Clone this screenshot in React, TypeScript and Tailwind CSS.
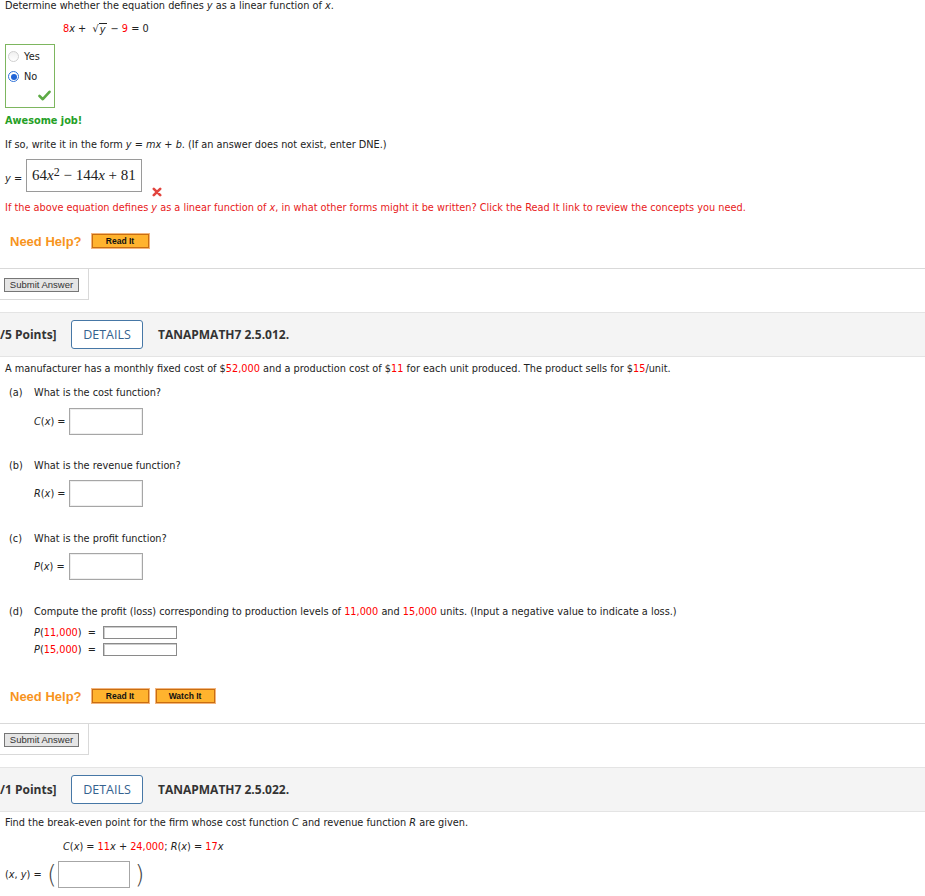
import type { ReactNode } from "react";

// small helpers for the math-ish inline bits
const Red = ({ children }: { children: ReactNode }) => <span className="text-[#ff0000]">{children}</span>;
const V = ({ children }: { children: ReactNode }) => <i>{children}</i>;

function HelpButton({ label, wide }: { label: string; wide?: boolean }) {
  return (
    <div className={wide ? "h-[16px] w-[61px] border border-[#f3b57c] bg-[#f7c27a]" : "h-[16px] w-[59px] border border-[#f3b57c] bg-[#f7c27a]"}>
      <div className="flex h-full w-full items-center justify-center border border-[#c86d12] bg-[#ffb32e] font-['Liberation_Sans',Arial,sans-serif] text-[8.5px] font-bold leading-none text-[#111]">
        {label}
      </div>
    </div>
  );
}

function NeedHelp({ watch, top }: { watch?: boolean; top: string }) {
  return (
    <div className={`${top} flex items-center pl-[10px]`}>
      <span className="font-['Liberation_Sans',Arial,sans-serif] text-[13px] font-bold leading-[15px] text-[#f7941d]">Need Help?</span>
      <div className="ml-[9px] flex gap-[5px]">
        <HelpButton label="Read It" />
        {watch && <HelpButton label="Watch It" wide />}
      </div>
    </div>
  );
}

function Submit() {
  return (
    <div className="mt-[19px] border-t border-[#d9d9d9]">
      <div className="h-[31px] w-[89px] border-r border-b border-[#d9d9d9] pt-[9px] pl-[4px]">
        <button className="flex h-[14px] w-[75px] items-center justify-center border border-[#767676] bg-[#e5e5e5] font-['Liberation_Sans',Arial,sans-serif] text-[9.5px] leading-none text-[#333]">
          Submit Answer
        </button>
      </div>
    </div>
  );
}

function Header({ points, code }: { points: string; code: string }) {
  return (
    <div className="mt-[12px] flex h-[45px] items-center border-y border-[#e4e4e4] bg-[#f4f4f4] font-['Open_Sans',sans-serif] text-[#333]">
      <span className="w-[56px] shrink-0 whitespace-nowrap text-[12px] font-bold">{points}</span>
      <div className="ml-[15px] flex h-[29px] w-[72px] items-center justify-center rounded-[3px] border-[1.5px] border-[#4677a6] bg-white text-[12.5px] text-[#35628f]">
        DETAILS
      </div>
      <span className="ml-[15px] whitespace-nowrap text-[12px] font-bold">{code}</span>
    </div>
  );
}

function Box({ big }: { big?: boolean }) {
  return big ? (
    <div className="h-[27px] w-[74px] border border-[#a6a6a6] bg-white shadow-[inset_0_0_0_1px_#eee]" />
  ) : (
    <div className="h-[13px] w-[74px] border border-[#8a8a8a] bg-white shadow-[inset_1px_1px_0_#ccc]" />
  );
}

function Part({ tag, text, top }: { tag: string; text: ReactNode; top: string }) {
  return (
    <div className={`${top} flex`}>
      <span className="w-[29px] shrink-0 pl-[4px]">{tag}</span>
      <span>{text}</span>
    </div>
  );
}

function AnswerRow({ label, top }: { label: ReactNode; top: string }) {
  return (
    <div className={`${top} flex items-center pl-[29px]`}>
      <span className="w-[35px] shrink-0">{label}</span>
      <Box big />
    </div>
  );
}

function CheckMark() {
  return (
    <svg width="13" height="11" viewBox="0 0 13 11">
      <path d="M1.5 6 L4.8 9.2 L11.5 1.8" fill="none" stroke="#5daa45" strokeWidth="2.6" strokeLinecap="round" strokeLinejoin="round" />
    </svg>
  );
}

function RedX() {
  return (
    <svg width="10" height="10" viewBox="0 0 10 10">
      <path d="M1.8 1.8 L8.2 8.2 M8.2 1.8 L1.8 8.2" stroke="#e2453f" strokeWidth="2.6" strokeLinecap="round" />
    </svg>
  );
}

function Radio({ on }: { on?: boolean }) {
  return on ? (
    <span className="flex h-[11px] w-[11px] items-center justify-center rounded-full border border-[#2f72d8] bg-white">
      <span className="h-[6px] w-[6px] rounded-full bg-[#1f63d6]" />
    </span>
  ) : (
    <span className="h-[11px] w-[11px] rounded-full border border-[#cfcfcf] bg-gradient-to-b from-[#f0f0f0] to-white" />
  );
}

export default function App() {
  return (
    <div className="h-[896px] w-[925px] overflow-hidden bg-white font-['DejaVu_Sans',Verdana,sans-serif] text-[9.75px] leading-[11px] text-[#222]">
      {/* question 1 tail */}
      <div className="pl-[5px]">
        <p>
          Determine whether the equation defines <V>y</V> as a linear function of <V>x</V>.
        </p>
        <p className="mt-[11px] flex items-end pl-[58px] leading-[13px]">
          <Red>8</Red>
          <V>x</V>&nbsp;+&nbsp;&nbsp;<span>√</span>
          <span className="border-t border-[#222] pl-[1px] pr-[2px] leading-[11px]">
            <V>y</V>
          </span>
          &nbsp;−&nbsp;<Red>9</Red>&nbsp;=&nbsp;0
        </p>
        <div className="mt-[9px] flex h-[64px] w-[50px] flex-col border-[1.5px] border-[#7db65f] pt-[6px] pl-[2px]">
          <label className="flex items-center gap-[5px]">
            <Radio />
            <span>Yes</span>
          </label>
          <label className="mt-[9px] flex items-center gap-[5px]">
            <Radio on />
            <span>No</span>
          </label>
          <div className="mt-[8px] flex justify-end pr-[3px]">
            <CheckMark />
          </div>
        </div>
        <p className="mt-[7px] font-bold text-[#26a026]">Awesome job!</p>
        <p className="mt-[13px]">
          If so, write it in the form <V>y</V> = <V>mx</V> + <V>b</V>. (If an answer does not exist, enter DNE.)
        </p>
        <div className="mt-[9px] flex items-start">
          <span className="mt-[14px] w-[21px]">
            <V>y</V> =
          </span>
          <div className="flex h-[33px] w-[116px] items-center border border-[#9a9a9a] pl-[5px] font-['Liberation_Serif',serif] text-[15px] leading-none text-[#222]">
            64<i>x</i>
            <sup className="relative -top-[4px] text-[12px]">2</sup>
            <span>&nbsp;−&nbsp;144<i>x</i>&nbsp;+&nbsp;81</span>
          </div>
          <span className="mt-[28px] ml-[10px]">
            <RedX />
          </span>
        </div>
        <p className="mt-[5px] text-[#e8201a]">
          If the above equation defines <V>y</V> as a linear function of <V>x</V>, in what other forms might it be written? Click the Read It link to review the concepts you need.
        </p>
      </div>
      <NeedHelp top="mt-[20px]" />
      <Submit />

      {/* question 2 */}
      <Header points="/5 Points]" code="TANAPMATH7 2.5.012." />
      <div className="pl-[5px]">
        <p className="mt-[6px]">
          A manufacturer has a monthly fixed cost of $<Red>52,000</Red> and a production cost of $<Red>11</Red> for each unit produced. The product sells for $<Red>15</Red>/unit.
        </p>
        <Part top="mt-[13px]" tag="(a)" text="What is the cost function?" />
        <AnswerRow
          top="mt-[10px]"
          label={
            <>
              <V>C</V>(<V>x</V>) =
            </>
          }
        />
        <Part top="mt-[25px]" tag="(b)" text="What is the revenue function?" />
        <AnswerRow
          top="mt-[9px]"
          label={
            <>
              <V>R</V>(<V>x</V>) =
            </>
          }
        />
        <Part top="mt-[26px]" tag="(c)" text="What is the profit function?" />
        <AnswerRow
          top="mt-[9px]"
          label={
            <>
              <V>P</V>(<V>x</V>) =
            </>
          }
        />
        <Part
          top="mt-[26px]"
          tag="(d)"
          text={
            <>
              Compute the profit (loss) corresponding to production levels of <Red>11,000</Red> and <Red>15,000</Red> units. (Input a negative value to indicate a loss.)
            </>
          }
        />
        <div className="mt-[9px] flex items-center pl-[29px]">
          <span className="w-[69px] shrink-0">
            <V>P</V>(<Red>11,000</Red>)&nbsp; =
          </span>
          <Box />
        </div>
        <div className="mt-[4px] flex items-center pl-[29px]">
          <span className="w-[69px] shrink-0">
            <V>P</V>(<Red>15,000</Red>)&nbsp; =
          </span>
          <Box />
        </div>
      </div>
      <NeedHelp top="mt-[32px]" watch />
      <Submit />

      {/* question 3 */}
      <Header points="/1 Points]" code="TANAPMATH7 2.5.022." />
      <div className="pl-[5px]">
        <p className="mt-[5px]">
          Find the break-even point for the firm whose cost function <V>C</V> and revenue function <V>R</V> are given.
        </p>
        <p className="mt-[13px] pl-[58px]">
          <V>C</V>(<V>x</V>) = <Red>11</Red>
          <V>x</V> + <Red>24,000</Red>; <V>R</V>(<V>x</V>) = <Red>17</Red>
          <V>x</V>
        </p>
        <div className="mt-[9px] flex items-center">
          <span className="w-[42px] shrink-0">
            (<V>x</V>, <V>y</V>) =
          </span>
          <span className="font-['DejaVu_Sans',sans-serif] text-[25px] font-extralight leading-none text-[#444]">(</span>
          <div className="ml-[1px] h-[27px] w-[72px] border border-[#a6a6a6] bg-white" />
          <span className="ml-[5px] font-['DejaVu_Sans',sans-serif] text-[25px] font-extralight leading-none text-[#444]">)</span>
        </div>
      </div>
    </div>
  );
}
